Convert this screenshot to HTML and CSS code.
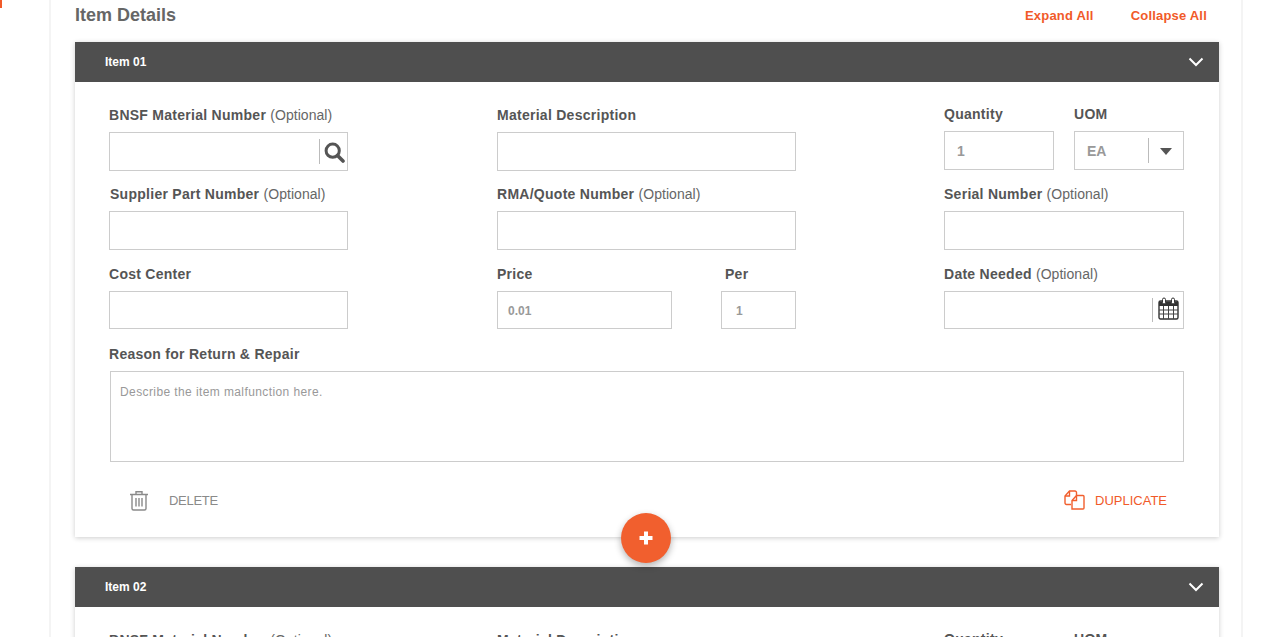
FILE: index.html
```html
<!DOCTYPE html>
<html lang="en">
<head>
<meta charset="utf-8">
<title>Item Details</title>
<link rel="stylesheet" href="styles.css">
</head>
<body>
<span class="edge-mark"></span>
<main class="shell">
  <header class="section-head">
    <h2 class="section-title">Item Details</h2>
    <nav class="section-actions">
      <a class="link">Expand All</a>
      <a class="link">Collapse All</a>
    </nav>
  </header>

  <section class="card">
    <div class="card-bar">
      <span class="card-name">Item 01</span>
      <svg class="chevron" width="16" height="10" viewBox="0 0 16 10"><path d="M1.5 1.5 8 8l6.5-6.500" fill="none" stroke="#fff" stroke-width="2"/></svg>
    </div>
    <div class="card-body">
      <div class="form-grid">
        <div class="field">
          <label class="label">BNSF Material Number <span class="opt">(Optional)</span></label>
          <div class="input input-icon">
            <span class="divider"></span>
            <svg class="icon-search" width="21" height="21" viewBox="0 0 21 21"><circle cx="8.7" cy="8.7" r="6.6" fill="none" stroke="#555" stroke-width="3"/><path d="M13.5 13.500 19 19" stroke="#555" stroke-width="3.6" stroke-linecap="round"/></svg>
          </div>
        </div>
        <div class="field">
          <label class="label">Material Description</label>
          <div class="input w-mid"></div>
        </div>
        <div class="field pair pair-qty">
          <div class="sub">
            <label class="label">Quantity</label>
            <div class="input value">1</div>
          </div>
          <div class="sub">
            <label class="label">UOM</label>
            <div class="input value select">EA<span class="divider divider-select"></span><span class="caret"></span></div>
          </div>
        </div>

        <div class="field">
          <label class="label nudge">Supplier Part Number <span class="opt">(Optional)</span></label>
          <div class="input"></div>
        </div>
        <div class="field">
          <label class="label">RMA/Quote Number <span class="opt">(Optional)</span></label>
          <div class="input w-mid"></div>
        </div>
        <div class="field">
          <label class="label">Serial Number <span class="opt">(Optional)</span></label>
          <div class="input"></div>
        </div>

        <div class="field row-short">
          <label class="label">Cost Center</label>
          <div class="input"></div>
        </div>
        <div class="field pair pair-price row-short">
          <div class="sub">
            <label class="label">Price</label>
            <div class="input value small">0.01</div>
          </div>
          <div class="sub">
            <label class="label nudge-per">Per</label>
            <div class="input value small small-per">1</div>
          </div>
        </div>
        <div class="field row-short">
          <label class="label">Date Needed <span class="opt">(Optional)</span></label>
          <div class="input input-icon">
            <span class="divider divider-cal"></span>
            <svg class="icon-cal" width="21" height="23" viewBox="0 0 21 23"><rect x="1" y="4" width="19" height="18" rx="1.5" fill="#fff" stroke="#333" stroke-width="1.4"/><path d="M1 4.500h19V9H1z" fill="#333"/><path d="M1 13h19M1 17h19M5.500 9v13M10.500 9v13M15.500 9v13" stroke="#444" stroke-width="1"/><rect x="4.500" y="1" width="3" height="6" rx="1.500" fill="#fff" stroke="#333"/><rect x="13.500" y="1" width="3" height="6" rx="1.500" fill="#fff" stroke="#333"/></svg>
          </div>
        </div>

        <div class="field field-wide">
          <label class="label">Reason for Return &amp; Repair</label>
          <div class="textarea">Describe the item malfunction here.</div>
        </div>
      </div>

      <div class="card-actions">
        <a class="action action-delete">
          <svg width="20" height="21" viewBox="0 0 20 21" fill="none" stroke="#8a8a8a" stroke-width="1.400"><path d="M1 4.500h18M7 4.500V1.700h6v2.800M3 4.500V18.500a1.500 1.500 0 0 0 1.500 1.500h11a1.500 1.500 0 0 0 1.500-1.500V4.500M7 8v8.500M10 8v8.500M13 8v8.500"/></svg>
          DELETE
        </a>
        <a class="action action-dup">
          <svg width="21" height="20" viewBox="0 0 21 20" fill="none" stroke="#f15f2e" stroke-width="1.400"><path d="M7 14.500H2.500a1.500 1.500 0 0 1-1.500-1.500V6l4.500-5H11a1.500 1.500 0 0 1 1.500 1.500V5"/><path d="M5.500 1v5H1"/><path d="M8 19V10.500L12.500 5.500H19a1 1 0 0 1 1 1V18a1 1 0 0 1-1 1z"/><path d="M12.500 5.500v5H8"/></svg>
          DUPLICATE
        </a>
      </div>
      <button class="fab" type="button" aria-label="Add item">
        <svg width="14" height="14" viewBox="0 0 14 14"><path d="M7 .500v13M.500 7h13" stroke="#fff" stroke-width="4"/></svg>
      </button>
    </div>
  </section>

  <section class="card">
    <div class="card-bar">
      <span class="card-name">Item 02</span>
      <svg class="chevron" width="16" height="10" viewBox="0 0 16 10"><path d="M1.5 1.5 8 8l6.5-6.500" fill="none" stroke="#fff" stroke-width="2"/></svg>
    </div>
    <div class="card-body">
      <div class="form-grid">
        <div class="field">
          <label class="label">BNSF Material Number <span class="opt">(Optional)</span></label>
          <div class="input"></div>
        </div>
        <div class="field">
          <label class="label">Material Description</label>
          <div class="input w-mid"></div>
        </div>
        <div class="field pair pair-qty">
          <div class="sub">
            <label class="label">Quantity</label>
            <div class="input value">1</div>
          </div>
          <div class="sub">
            <label class="label">UOM</label>
            <div class="input value">EA</div>
          </div>
        </div>
      </div>
    </div>
  </section>
</main>
</body>
</html>
```
FILE: styles.css
```css
* { box-sizing: border-box; }
html, body { height: 637px; overflow: hidden; }
body {
  margin: 0;
  background: #fff;
  font-family: "Liberation Sans", Arial, sans-serif;
  color: #555;
}
.edge-mark {
  position: absolute;
  left: 0;
  top: 0;
  width: 2px;
  height: 8px;
  background: #f15a29;
}
.shell {
  width: 1194px;
  height: 637px;
  margin-left: 49px;
  padding: 0 22px 0 24px;
  border-left: 2px solid #f4f4f4;
  border-right: 2px solid #f4f4f4;
  overflow: hidden;
}
.section-head {
  display: flex;
  justify-content: space-between;
  align-items: center;
  height: 42px;
  padding-bottom: 12px;
}
.section-title {
  margin: 0;
  font-size: 18px;
  font-weight: 700;
  color: #666;
}
.section-actions {
  display: flex;
  gap: 37px;
  padding-right: 12px;
}
.link {
  font-size: 13px;
  font-weight: 700;
  letter-spacing: .2px;
  color: #f15a29;
}
.card {
  position: relative;
  margin-bottom: 30px;
  background: #fff;
  box-shadow: 0 1px 5px rgba(0, 0, 0, .2);
}
.card-bar {
  display: flex;
  justify-content: space-between;
  align-items: center;
  height: 39.500px;
  padding: 0 15px 0 30px;
  background: #4f4f4f;
}
.card-name {
  font-size: 12px;
  font-weight: 700;
  color: #fff;
}
.card-body {
  position: relative;
  height: 455.500px;
  padding: 25.500px 34px 0;
}
.form-grid {
  display: grid;
  grid-template-columns: 388px 447px 240px;
  grid-template-rows: 79px 80px 80px auto;
}
.field-wide { grid-column: 1 / -1; }
.pair { display: flex; }
.pair-qty { gap: 20px; margin-top: -1px; }
.pair-qty .sub { width: 110px; }
.pair-price { gap: 49px; }
.pair-price .sub:first-child { width: 175px; }
.pair-price .sub:last-child { width: 75px; }
.label {
  display: block;
  height: 17px;
  margin-bottom: 8px;
  font-size: 14px;
  line-height: 17px;
  font-weight: 700;
  letter-spacing: .27px;
  color: #555;
  white-space: nowrap;
}
.opt { font-weight: 400; letter-spacing: .05px; color: #666; }
.nudge { padding-left: 1px; }
.nudge-per { padding-left: 4px; }
.input {
  position: relative;
  display: flex;
  align-items: center;
  width: 239px;
  height: 38.500px;
  background: #fff;
  border: 1px solid #ccc;
}
.row-short .input { height: 38px; }
.field:nth-child(3n) > .input { width: 240px; }
.w-mid { width: 299px; }
.sub .input { width: 100%; }
.value {
  padding: 2px 0 0 12px;
  font-size: 14px;
  font-weight: 700;
  color: #999;
}
.small { padding-left: 10px; font-size: 12px; }
.small-per { padding-left: 14px; }
.divider {
  position: absolute;
  top: 6px;
  bottom: 6px;
  right: 27px;
  width: 1px;
  background: #bbb;
}
.divider-cal { right: 30px; }
.divider-select { right: 34px; }
.icon-search { position: absolute; right: 2px; top: 9px; }
.icon-cal { position: absolute; right: 4px; top: 5px; }
.caret {
  position: absolute;
  right: 11px;
  top: 16px;
  border-left: 6px solid transparent;
  border-right: 6px solid transparent;
  border-top: 7px solid #555;
}
.textarea {
  width: 1074px;
  height: 91px;
  margin-left: 1px;
  padding: 12px 9px;
  border: 1px solid #ccc;
  font-size: 12px;
  letter-spacing: .4px;
  line-height: 16px;
  color: #999;
}
.card-actions {
  display: flex;
  justify-content: space-between;
  align-items: center;
  height: 36px;
  margin-top: 20px;
  padding: 0 18px 0 20px;
}
.action {
  display: flex;
  align-items: center;
  font-size: 13px;
  font-weight: 400;
}
.action-delete { gap: 20px; color: #8a8a8a; letter-spacing: -.3px; }
.action-dup { gap: 10px; color: #f15a29; }
.fab {
  position: absolute;
  left: 546px;
  bottom: -25.500px;
  z-index: 2;
  display: flex;
  align-items: center;
  justify-content: center;
  width: 50px;
  height: 50px;
  padding: 0;
  border: 0;
  border-radius: 50%;
  background: #f15f2e;
  box-shadow: 0 3px 7px rgba(0, 0, 0, .3);
}
```
